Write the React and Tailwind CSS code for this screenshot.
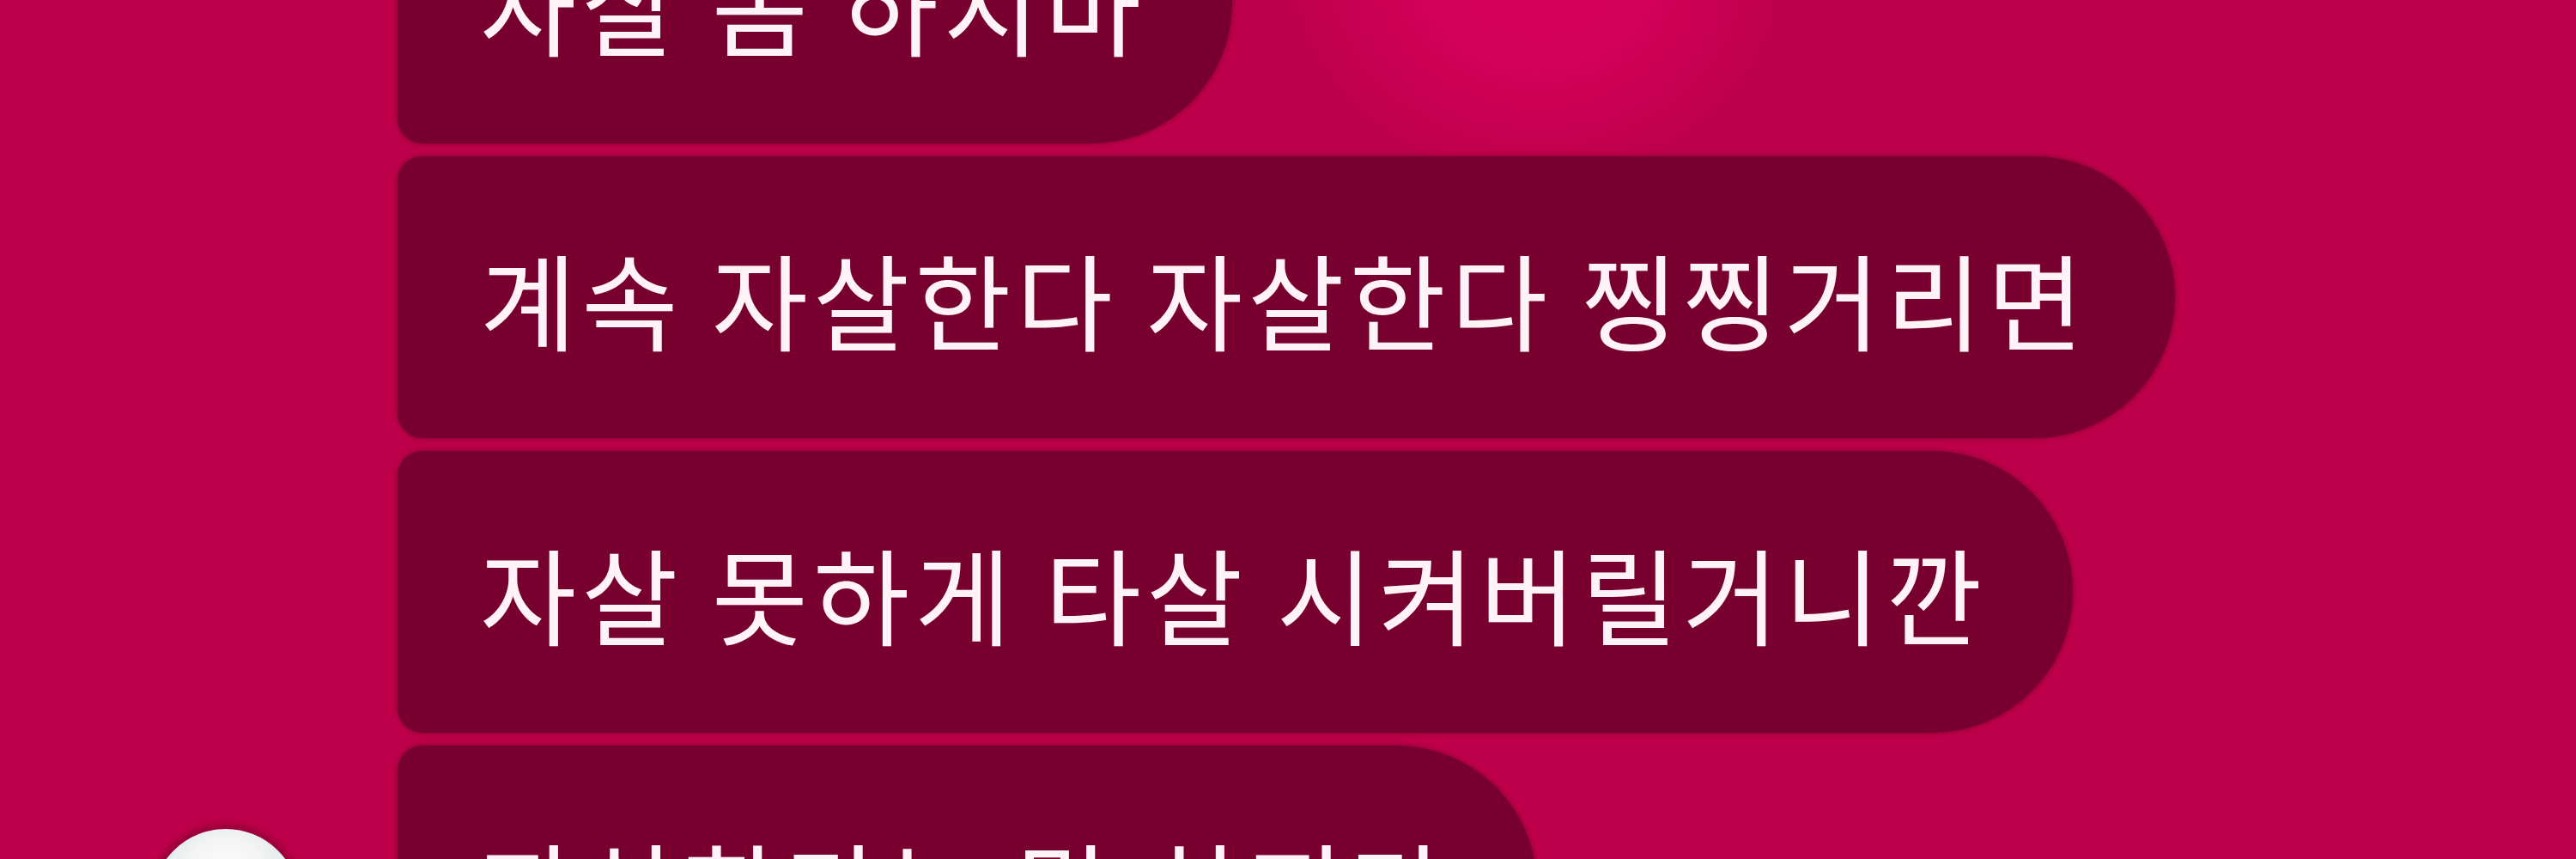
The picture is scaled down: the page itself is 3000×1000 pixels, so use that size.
import React from "react";

const messages = [
  "자살 좀 하지마",
  "계속 자살한다 자살한다 찡찡거리면",
  "자살 못하게 타살 시켜버릴거니깐",
  "자살한다는 말 하지마",
];

function Avatar() {
  return (
    <div className="ml-[172px] mt-[92px] h-[182px] w-[182px] rounded-full border-[5px] border-[#9e003c] bg-[radial-gradient(circle_at_50%_35%,#ffffff_0,#f4f4f4_35%,#d9e8e6_60%,#eeeeee_100%)] shadow-[0_0_10px_rgba(120,0,40,0.6)]" />
  );
}

function Bubble({ text }) {
  return (
    <div className="flex h-[328px] items-center self-start rounded-l-[30px] rounded-r-[170px] bg-[#78002f] pl-[96px] pr-[100px] shadow-[0_0_6px_rgba(100,0,35,0.7)]">
      <span className="whitespace-nowrap text-[122px] font-normal leading-none tracking-[6px] text-[#fff3f7] font-['Noto_Sans_CJK_KR','Noto_Sans',sans-serif]">
        {text}
      </span>
    </div>
  );
}

export default function App() {
  return (
    <div className="h-[1000px] w-[3000px] overflow-hidden bg-[#be004a] bg-[radial-gradient(ellipse_290px_250px_at_1790px_-40px,#d5005a_0,#d3005a_45%,rgba(190,0,74,0)_100%)]">
      <div className="-mt-[161px] flex flex-col gap-[15px]">
        {messages.map((m, i) => (
          <div key={i} className="flex">
            <div className="w-[463px] shrink-0">{i === messages.length - 1 && <Avatar />}</div>
            <Bubble text={m} />
          </div>
        ))}
      </div>
    </div>
  );
}
